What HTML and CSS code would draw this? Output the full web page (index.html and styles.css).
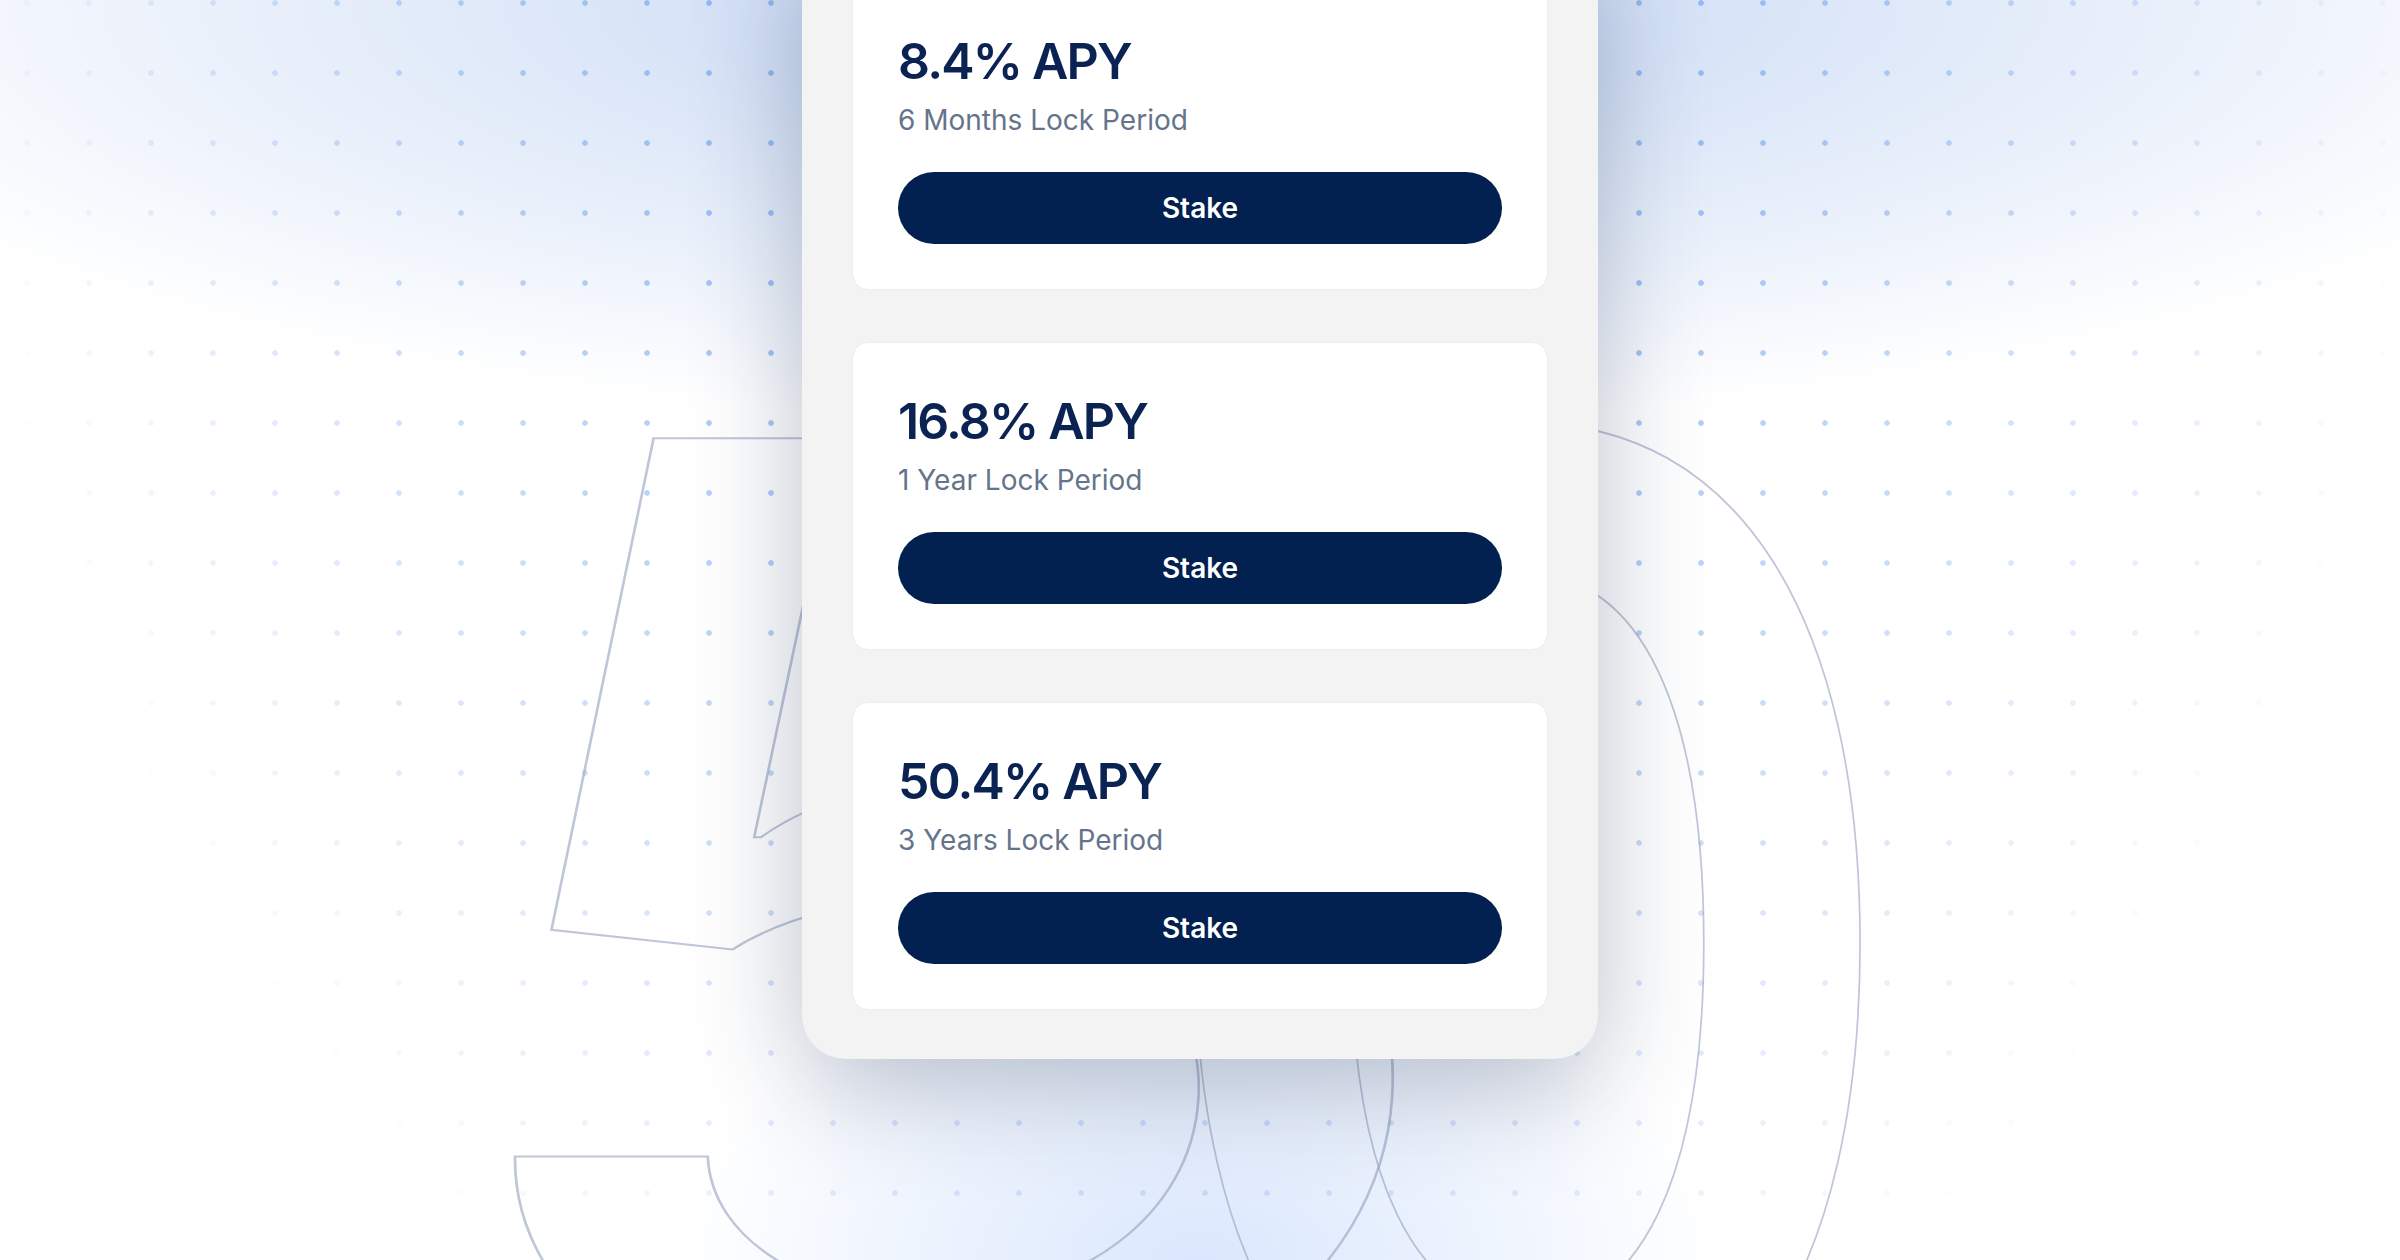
FILE: index.html
```html
<!DOCTYPE html>
<html lang="en">
<head>
    <meta charset="UTF-8">
    <meta name="viewport" content="width=device-width, initial-scale=1.0">
    <title>Staking Plans</title>
    <link rel="stylesheet" href="styles.css">
</head>
<body>
    <div class="backdrop"></div>
    <div class="dots"></div>
    <div class="big-number" aria-hidden="true">
        <span class="digit digit-five">5</span>
        <span class="digit digit-zero">0</span>
    </div>

    <main class="stake-panel">
        <div class="plan-card">
            <h2 class="plan-apy">8.4% APY</h2>
            <p class="plan-period">6 Months Lock Period</p>
            <button class="stake-btn">Stake</button>
        </div>

        <div class="plan-card">
            <h2 class="plan-apy">16.8% APY</h2>
            <p class="plan-period">1 Year Lock Period</p>
            <button class="stake-btn">Stake</button>
        </div>

        <div class="plan-card">
            <h2 class="plan-apy">50.4% APY</h2>
            <p class="plan-period">3 Years Lock Period</p>
            <button class="stake-btn">Stake</button>
        </div>
    </main>
</body>
</html>
```

FILE: styles.css
```css
* {
    margin: 0;
    padding: 0;
    box-sizing: border-box;
}

body {
    font-family: Inter, 'Noto Sans', sans-serif;
    background: #ffffff;
    height: 1260px;
    overflow: hidden;
    position: relative;
    display: flex;
    justify-content: center;
    align-items: flex-start;
}

/* soft blue glow at the top and under the panel */
.backdrop {
    position: absolute;
    inset: 0;
    background:
        radial-gradient(ellipse 1500px 430px at 50% 0, rgba(178, 202, 240, 0.78), rgba(178, 202, 240, 0) 100%),
        radial-gradient(ellipse 520px 330px at 50% 100%, rgba(205, 223, 252, 0.75), rgba(205, 223, 252, 0) 100%);
}

.dots {
    position: absolute;
    inset: 0;
    background-image: radial-gradient(circle, rgba(92, 148, 238, 0.55) 2.4px, rgba(92, 148, 238, 0) 3.2px);
    background-size: 62px 70px;
    background-position: -4px -32px;
    -webkit-mask-image: radial-gradient(ellipse 1250px 1550px at 50% 0, #000 40%, transparent 100%);
    mask-image: radial-gradient(ellipse 1250px 1550px at 50% 0, #000 40%, transparent 100%);
}

/* outlined "50" behind the panel */
.big-number {
    position: absolute;
    inset: 0;
}

.digit {
    position: absolute;
    font-family: Inter, sans-serif;
    line-height: 1;
    color: transparent;
    -webkit-text-stroke: 2px rgba(150, 163, 192, 0.62);
}

.digit-five {
    left: 371px;
    top: 256px;
    font-size: 1337px;
    font-weight: 500;
    transform-origin: 0 1154px;
    transform: skewX(-3.5deg) scaleX(1.33);
}

.digit-zero {
    left: 1135px;
    top: 247px;
    font-size: 1390px;
    font-weight: 600;
    transform-origin: 0 1200px;
    transform: scaleX(0.856);
}

.stake-panel {
    position: relative;
    z-index: 1;
    width: 796px;
    margin-top: -68px;
    padding: 50px 50px 49px;
    background: #f3f3f3;
    border-radius: 44px;
    box-shadow: 0 26px 110px rgba(22, 42, 82, 0.3);
    display: flex;
    flex-direction: column;
    gap: 52px;
}

.plan-card {
    background: #ffffff;
    border: 1px solid #eaedf1;
    border-radius: 16px;
    padding: 48px 45px 45px;
    display: flex;
    flex-direction: column;
}

.plan-apy {
    color: #0a2353;
    font-size: 50px;
    font-weight: 600;
    line-height: 60px;
    letter-spacing: -1.8px;
}

.plan-period {
    color: #64748b;
    font-size: 28px;
    line-height: 34px;
    margin-top: 12px;
}

.stake-btn {
    margin-top: 35px;
    height: 72px;
    border: none;
    border-radius: 36px;
    background: #022150;
    color: #ffffff;
    font-family: Inter, sans-serif;
    font-size: 28px;
    font-weight: 600;
    cursor: pointer;
}
```
